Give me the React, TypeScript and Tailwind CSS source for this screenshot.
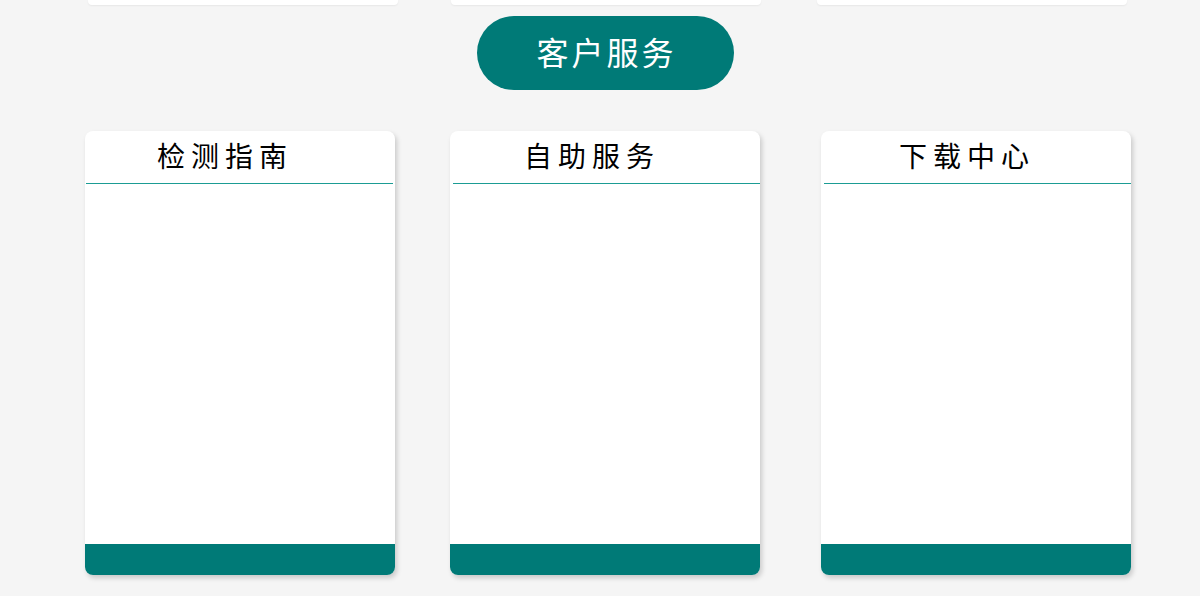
import React from 'react';

const CARDS = [
  { title: '检测指南', gap: 'ml-[85px]', line: 'ml-px mr-[2px]', pad: 'pr-[30px]' },
  { title: '自助服务', gap: 'ml-[55px]', line: 'ml-[3px]', pad: 'pr-[26px]' },
  { title: '下载中心', gap: 'ml-[61px]', line: 'ml-[3px]', pad: 'pr-[18px]' },
];

const Card: React.FC<{ title: string; gap: string; line: string; pad: string }> = ({ title, gap, line, pad }) => (
  <div className={`${gap} w-[310px] h-[444px] flex flex-col rounded-lg bg-white shadow-[2px_3px_5px_rgba(0,0,0,0.18)] overflow-hidden`}>
    <div className={`h-[52px] flex items-center justify-center ${pad} pb-[4px]`}>
      <h3 className="text-[28px] leading-none tracking-[6px] text-black font-['Noto_Sans_CJK_SC',serif]">{title}</h3>
    </div>
    <div className={`h-px bg-[#1b9c94] ${line}`} />
    <div className="flex-1" />
    <div className="h-[31px] bg-[#007a77]" />
  </div>
);

export default function App() {
  return (
    <div className="w-[1200px] h-[596px] bg-[#f5f5f5] overflow-hidden font-['Noto_Sans_CJK_SC',sans-serif]">
      {/* remnants of the section above */}
      <div className="flex h-[5px]">
        <div className="ml-[88px] w-[310px] h-full bg-white rounded-b shadow-[0_1px_2px_rgba(0,0,0,0.06)]" />
        <div className="ml-[53px] w-[310px] h-full bg-white rounded-b shadow-[0_1px_2px_rgba(0,0,0,0.06)]" />
        <div className="ml-[56px] w-[310px] h-full bg-white rounded-b shadow-[0_1px_2px_rgba(0,0,0,0.06)]" />
      </div>

      <div className="flex justify-center mt-[11px]">
        <div className="ml-[10px] w-[257px] h-[74px] rounded-full bg-[#007a77] flex items-center justify-center pb-[4px]">
          <span className="text-[32px] leading-none text-white tracking-[3px] pl-[3px]">客户服务</span>
        </div>
      </div>

      <div className="flex mt-[41px]">
        {CARDS.map((c) => (
          <Card key={c.title} {...c} />
        ))}
      </div>
    </div>
  );
}
